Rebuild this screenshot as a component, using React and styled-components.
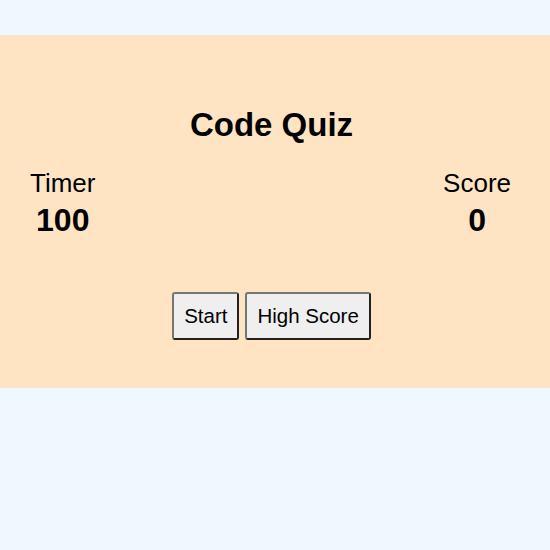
import styled, { createGlobalStyle } from "styled-components";

const GlobalStyle = createGlobalStyle`
  body {
    margin: 0;
    background-color: aliceblue;
    font-family: "Liberation Sans", Arial, sans-serif;
  }
`;

const Page = styled.main`
  padding-top: 35px;
`;

const Panel = styled.section`
  background-color: bisque;
  height: 353px;
  box-sizing: border-box;
  padding: 71px 7px 0 0;
`;

const Title = styled.h1`
  margin: 0;
  text-align: center;
  font-size: 33px;
  font-weight: 700;
  line-height: 38px;
`;

const Stats = styled.div`
  display: flex;
  justify-content: space-between;
  padding: 0 32px 0 30px;
  margin-top: 24px;
`;

const Stat = styled.div`
  display: flex;
  flex-direction: column;
  align-items: center;
`;

const Label = styled.span`
  font-size: 26px;
  line-height: 30px;
`;

const Value = styled.span`
  font-size: 32px;
  font-weight: 700;
  line-height: 38px;
  margin-top: 3px;
`;

const Actions = styled.div`
  display: flex;
  justify-content: center;
  gap: 6px;
  margin-top: 53px;
`;

const Button = styled.button`
  font-family: "Liberation Sans", Arial, sans-serif;
  font-size: 20.5px;
  height: 48px;
  padding: 0 10px;
  background-color: #efefef;
  border: 2px outset #767676;
  border-radius: 3px;
  color: #000;
  cursor: pointer;
`;

const App = () => {
  return (
    <>
      <GlobalStyle />
      <Page>
        <Panel>
          <Title>Code Quiz</Title>
          <Stats>
            <Stat>
              <Label>Timer</Label>
              <Value>100</Value>
            </Stat>
            <Stat>
              <Label>Score</Label>
              <Value>0</Value>
            </Stat>
          </Stats>
          <Actions>
            <Button>Start</Button>
            <Button>High Score</Button>
          </Actions>
        </Panel>
      </Page>
    </>
  );
};

export default App;
